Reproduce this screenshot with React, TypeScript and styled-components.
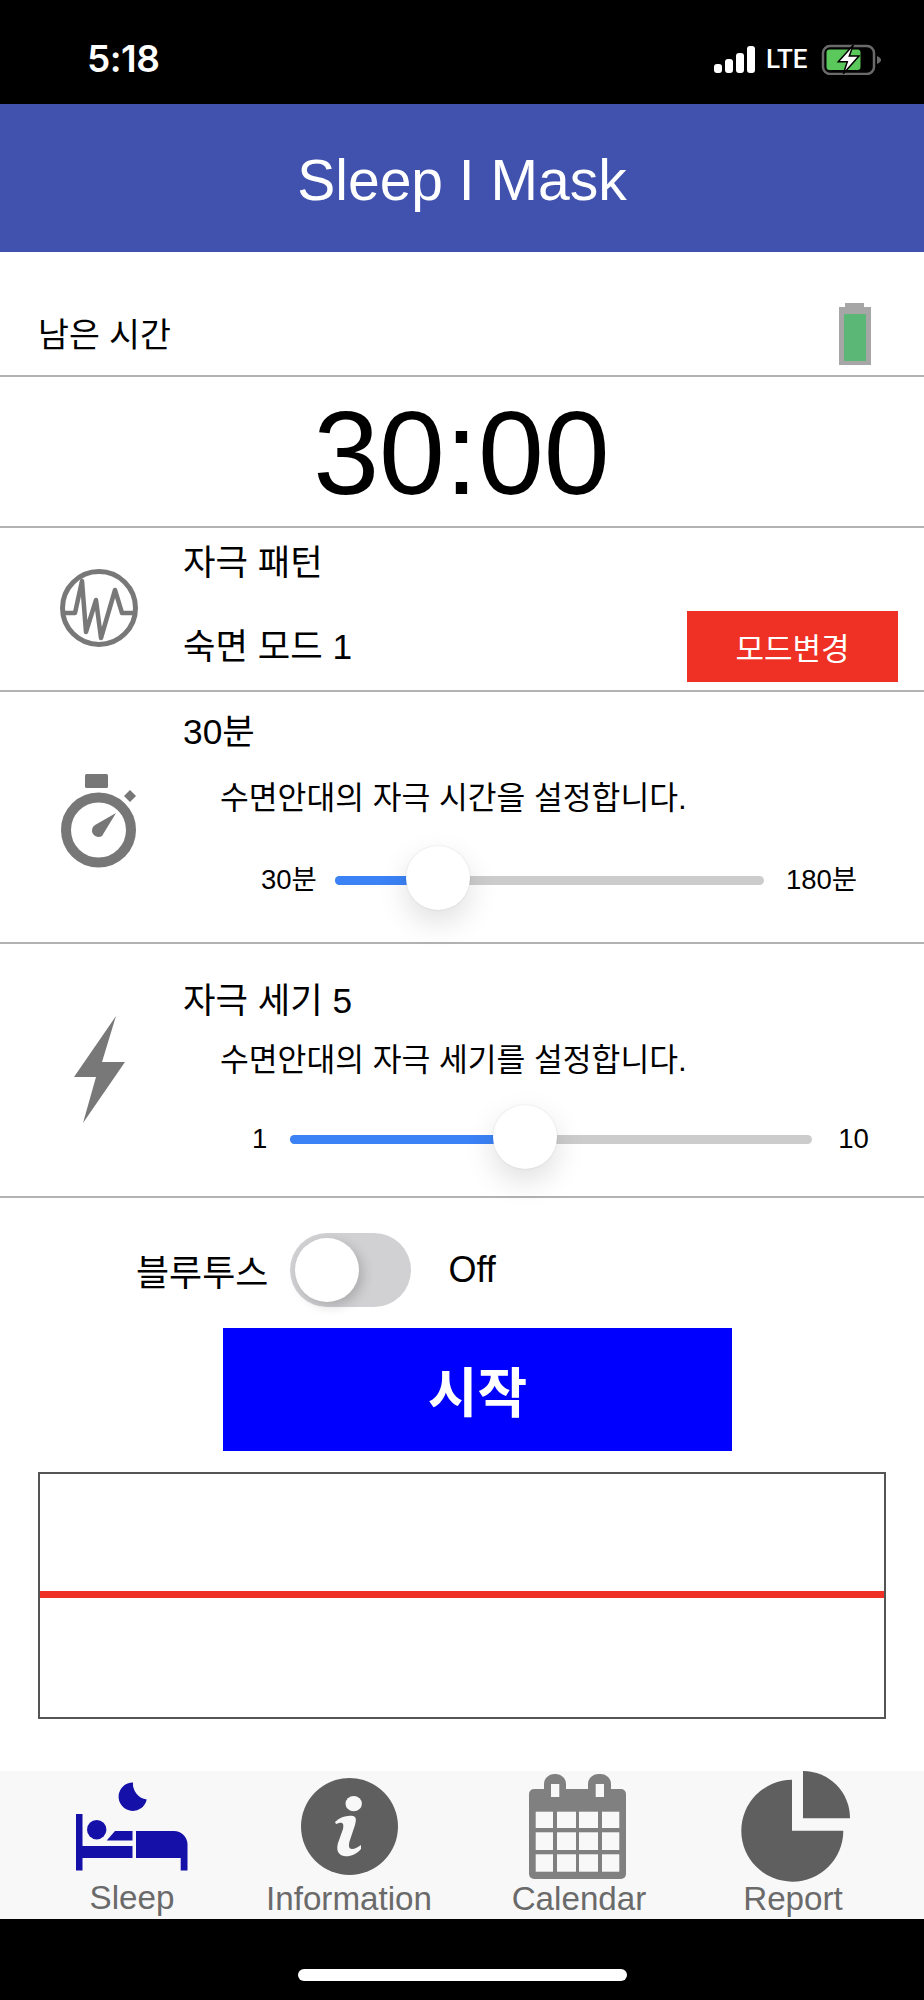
import React from 'react';
import styled, { createGlobalStyle } from 'styled-components';

const GlobalStyle = createGlobalStyle`
  html, body {
    margin: 0;
    padding: 0;
    background: #ffffff;
  }
  * {
    box-sizing: border-box;
  }
`;

const Screen = styled.div`
  width: 924px;
  height: 2000px;
  display: flex;
  flex-direction: column;
  font-family: "Liberation Sans", "Noto Sans CJK KR", sans-serif;
  color: #000000;
`;

const StatusBar = styled.div`
  height: 104px;
  background: #000000;
  color: #ffffff;
  display: flex;
  align-items: center;
  justify-content: space-between;
  padding: 14px 42px 0 87px;
`;

const Clock = styled.span`
  font-family: Inter, sans-serif;
  font-size: 37px;
  font-weight: 600;
  letter-spacing: -0.5px;
  margin-top: -1px;
`;

const StatusIcons = styled.div`
  display: flex;
  align-items: center;
  gap: 11px;
`;

const Signal = styled.div`
  display: flex;
  align-items: flex-end;
  gap: 3px;
  height: 27px;
`;

const SignalBar = styled.span<{ $height: number }>`
  width: 8px;
  height: ${(p) => p.$height}px;
  background: #ffffff;
  border-radius: 3px;
`;

const Lte = styled.span`
  font-family: Roboto, sans-serif;
  font-size: 26px;
  font-weight: 500;
  width: 43px;
`;

const Header = styled.div`
  height: 148px;
  padding-top: 3px;
  background: #4051ae;
  color: #ffffff;
  font-size: 57px;
  display: flex;
  align-items: center;
  justify-content: center;
`;

const Row = styled.div<{ $height: number }>`
  height: ${(p) => p.$height}px;
  border-bottom: 2px solid #b2b2b2;
`;

const RemainingRow = styled(Row)`
  display: flex;
  justify-content: space-between;
  padding: 51px 53px 0 38px;
  font-size: 33.6px;
`;

const RemainingLabel = styled.span`
  margin-top: 5px;
`;

const TimerRow = styled(Row)`
  display: flex;
  align-items: center;
  justify-content: center;
  font-size: 118.5px;
  line-height: 1;
  padding: 3px 1px 0 0;
`;

const IconRow = styled(Row)`
  display: grid;
  grid-template-columns: 183px 1fr;
`;

const IconCell = styled.div<{ $top: number; $left: number }>`
  padding: ${(p) => p.$top}px 0 0 ${(p) => p.$left}px;
`;

const Body = styled.div<{ $top: number }>`
  display: flex;
  flex-direction: column;
  padding-top: ${(p) => p.$top}px;
`;

const Title = styled.div`
  font-size: 35.3px;
  line-height: 46px;
`;

const ModeLine = styled.div`
  display: flex;
  align-items: center;
  justify-content: space-between;
  margin-top: 25px;
  padding-right: 26px;
`;

const ModeButton = styled.button`
  width: 211px;
  height: 71px;
  border: none;
  padding: 0;
  background: #ee3124;
  color: #ffffff;
  font-family: inherit;
  font-size: 31px;
`;

const Description = styled.div<{ $top: number }>`
  font-size: 31.3px;
  line-height: 40px;
  margin: ${(p) => p.$top}px 0 0 37px;
`;

const SliderLine = styled.div<{ $top: number; $left: number; $track: number; $gap: number }>`
  display: grid;
  grid-template-columns: auto ${(p) => p.$track}px auto;
  column-gap: ${(p) => p.$gap}px;
  justify-content: start;
  align-items: center;
  margin: ${(p) => p.$top}px 0 0 ${(p) => p.$left}px;
  font-size: 27.5px;
  line-height: 34px;
`;

const Track = styled.div`
  position: relative;
  height: 9px;
  border-radius: 5px;
  background: #cccccc;
`;

const TrackFill = styled.div`
  height: 100%;
  border-radius: 5px;
  background: #3b82f6;
`;

const Thumb = styled.div`
  position: absolute;
  top: calc(50% - 2.5px);
  width: 64px;
  height: 64px;
  border-radius: 50%;
  background: #ffffff;
  transform: translate(-50%, -50%);
  box-shadow: 0 12px 30px rgba(0, 0, 0, 0.13), 0 0 2px rgba(0, 0, 0, 0.12);
`;

const SliderMax = styled.span<{ $shift: number }>`
  margin-left: ${(p) => p.$shift}px;
`;

const Controls = styled.div`
  flex: 1;
  display: flex;
  flex-direction: column;
  padding-top: 35px;
`;

const BluetoothLine = styled.div`
  display: flex;
  align-items: center;
  padding-left: 136px;
  height: 74px;
  font-size: 36px;
`;

const Toggle = styled.div`
  position: relative;
  width: 121px;
  height: 74px;
  margin: 0 37px 0 22px;
  border-radius: 37px;
  background: #d1d1d4;
`;

const ToggleKnob = styled.div`
  position: absolute;
  top: 5px;
  left: 5px;
  width: 64px;
  height: 64px;
  border-radius: 50%;
  background: #ffffff;
  box-shadow: 4px 4px 12px rgba(0, 0, 0, 0.18);
`;

const StartButton = styled.button`
  display: block;
  width: 509px;
  height: 123px;
  margin: 21px 0 0 223px;
  border: none;
  padding: 0;
  background: #0000ff;
  color: #ffffff;
  font-family: inherit;
  font-size: 54px;
  font-weight: 700;
`;

const Graph = styled.div`
  width: 848px;
  height: 247px;
  margin: 21px 0 0 38px;
  border: 2.5px solid #555555;
  display: flex;
  align-items: center;
`;

const GraphLine = styled.div`
  width: 100%;
  height: 7px;
  margin-top: -2px;
  background: #ee3124;
`;

const TabBar = styled.div`
  flex: none;
  height: 148px;
  background: #f8f8f8;
  display: grid;
  grid-template-columns: 264px 170px 290px 138px;
`;

const Tab = styled.div`
  display: flex;
  flex-direction: column;
  align-items: center;
  font-size: 33.2px;
  line-height: 36px;
  color: #6a6a6a;
  white-space: nowrap;
`;

const IconSlot = styled.div<{ $nudge?: number }>`
  height: 111px;
  display: flex;
  align-items: center;
  margin-left: ${(p) => p.$nudge ?? 0}px;
`;

const TabLabel = styled.span<{ $lift?: number }>`
  margin-top: ${(p) => -(p.$lift ?? 0)}px;
`;

const HomeArea = styled.div`
  flex: none;
  height: 81px;
  background: #000000;
  display: flex;
  justify-content: center;
  padding: 50px 0 0 1px;
`;

const HomeIndicator = styled.div`
  width: 329px;
  height: 12px;
  border-radius: 6px;
  background: #ffffff;
`;

const Glyph = styled.svg`
  display: block;
  flex: none;
`;

function ChargingBattery() {
  return (
    <Glyph width="62" height="32" viewBox="0 0 62 32">
      <rect x="3" y="3" width="51" height="28" rx="7" fill="none" stroke="#6a6a6a" strokeWidth="2.5" />
      <rect x="6.5" y="6.5" width="34" height="20.5" rx="3" fill="#5ac85a" />
      <path d="M57 13 C60 14 61 16 61 17 C61 18 60 20 57 21 Z" fill="#6a6a6a" />
      <path d="M33.3 2 L18.3 18.7 H27.3 L23.3 30.7 L39 13 H29.3 Z" fill="#ffffff" stroke="#000000" strokeWidth="1.5" />
    </Glyph>
  );
}

function MaskBattery() {
  return (
    <Glyph width="32" height="62" viewBox="0 0 32 62">
      <path d="M6 0 H25 V4 H32 V62 H0 V4 H6 Z" fill="#a6a6a6" />
      <rect x="5" y="11" width="22" height="47" rx="1" fill="#5bb776" />
    </Glyph>
  );
}

function WaveIcon() {
  return (
    <Glyph width="78" height="78" viewBox="0 0 78 78">
      <circle cx="39" cy="39" r="36.5" fill="none" stroke="#787878" strokeWidth="5" />
      <path
        d="M5 44 H15 L22 12 L26 63 L36 31 L41 69 L55 21 L62 44 H75"
        fill="none"
        stroke="#787878"
        strokeWidth="4.5"
        strokeLinejoin="round"
        strokeLinecap="round"
      />
    </Glyph>
  );
}

function StopwatchIcon() {
  return (
    <Glyph width="78" height="95" viewBox="0 0 78 95">
      <rect x="24" y="0" width="23" height="14" rx="1.5" fill="#777777" />
      <circle cx="37.5" cy="56" r="32.5" fill="none" stroke="#777777" strokeWidth="10" />
      <path d="M69 16 L75 22 L69 28 L63 22 Z" fill="#777777" />
      <path d="M55 39 L41 62 A6.5 6.5 0 1 1 34 51 Z" fill="#777777" />
    </Glyph>
  );
}

function BoltIcon() {
  return (
    <Glyph width="52" height="108" viewBox="0 0 52 108">
      <path d="M42 0 L28 46 H51 L9 107 L22 61 H0 Z" fill="#787878" />
    </Glyph>
  );
}

function SleepIcon() {
  return (
    <Glyph width="112" height="89" viewBox="0 0 112 89">
      <g fill="#1510a8">
        <path d="M57 0.5 A14.2 14.2 0 1 0 70.7 17.5 A 16 16 0 0 1 57 0.5 Z" />
        <rect x="0" y="32" width="6.5" height="56.5" />
        <rect x="6" y="64" width="50.5" height="12" />
        <circle cx="20.7" cy="47.7" r="9.7" />
        <path d="M30.7 58.5 L39 49 H56.5 V58.5 Z" />
        <path d="M60 49 H98 A13.5 13.5 0 0 1 111.5 62.5 V88.5 H104.7 V76 H60 Z" />
      </g>
    </Glyph>
  );
}

function InfoIcon() {
  return (
    <Glyph width="97" height="97" viewBox="0 0 97 97">
      <circle cx="48.5" cy="48.5" r="48.5" fill="#5f5f5f" />
      <ellipse cx="52.7" cy="25.7" rx="8.2" ry="7.6" fill="#f8f8f8" />
      <path
        d="M34 44 C39 39 46 37 52 38 C56 39 55 43 54 47 L49 62 C47 68 48 71 51 71 C54 71 57 69 60 67 L60 71 C55 77 48 79 43 78 C37 77 35 72 37 65 L42 51 C43 46 42 44 38 45 L35 46 Z"
        fill="#f8f8f8"
      />
    </Glyph>
  );
}

function CalendarIcon() {
  const columns = [
    [6.7, 17.3],
    [28, 19],
    [50, 19],
    [73, 17.3],
  ];
  const rows = [
    [37.7, 16.3],
    [58.3, 17.7],
    [80.3, 17.4],
  ];
  return (
    <Glyph width="97" height="105" viewBox="0 0 97 105">
      <rect x="0" y="15" width="97" height="90" rx="5" fill="#808080" />
      <rect x="15" y="0" width="22" height="30" rx="10" fill="#808080" />
      <rect x="59" y="0" width="23" height="30" rx="10" fill="#808080" />
      <rect x="22" y="10" width="8.3" height="13" fill="#f8f8f8" />
      <rect x="66.7" y="10" width="8.3" height="13" fill="#f8f8f8" />
      {rows.map(([y, h]) =>
        columns.map(([x, w]) => <rect key={`${x}-${y}`} x={x} y={y} width={w} height={h} fill="#f8f8f8" />)
      )}
    </Glyph>
  );
}

function ReportIcon() {
  return (
    <Glyph width="110" height="111" viewBox="0 0 110 111">
      <path d="M51 8.7 A51 51 0 1 0 102.3 59.7 H51 Z" fill="#5f5f5f" />
      <path d="M62 0 A47 47 0 0 1 109 47.3 H62 Z" fill="#5f5f5f" />
    </Glyph>
  );
}

type SliderProps = {
  min: string;
  max: string;
  percent: number;
  top: number;
  left: number;
  track: number;
  gap: number;
  maxShift: number;
};

function Slider({ min, max, percent, top, left, track, gap, maxShift }: SliderProps) {
  return (
    <SliderLine $top={top} $left={left} $track={track} $gap={gap}>
      <span>{min}</span>
      <Track>
        <TrackFill style={{ width: `${percent}%` }} />
        <Thumb style={{ left: `${percent}%` }} />
      </Track>
      <SliderMax $shift={maxShift}>{max}</SliderMax>
    </SliderLine>
  );
}

export default function App() {
  return (
    <Screen>
      <GlobalStyle />
      <StatusBar>
        <Clock>5:18</Clock>
        <StatusIcons>
          <Signal>
            <SignalBar $height={9} />
            <SignalBar $height={14} />
            <SignalBar $height={20} />
            <SignalBar $height={27} />
          </Signal>
          <Lte>LTE</Lte>
          <ChargingBattery />
        </StatusIcons>
      </StatusBar>
      <Header>Sleep I Mask</Header>
      <RemainingRow $height={125}>
        <RemainingLabel>남은 시간</RemainingLabel>
        <MaskBattery />
      </RemainingRow>
      <TimerRow $height={151}>30:00</TimerRow>
      <IconRow $height={164}>
        <IconCell $top={41} $left={60}>
          <WaveIcon />
        </IconCell>
        <Body $top={12}>
          <Title>자극 패턴</Title>
          <ModeLine>
            <Title>숙면 모드 1</Title>
            <ModeButton>모드변경</ModeButton>
          </ModeLine>
        </Body>
      </IconRow>
      <IconRow $height={252}>
        <IconCell $top={82} $left={61}>
          <StopwatchIcon />
        </IconCell>
        <Body $top={17}>
          <Title>30분</Title>
          <Description $top={24}>수면안대의 자극 시간을 설정합니다.</Description>
          <Slider min="30분" max="180분" percent={24} top={44} left={78} track={429} gap={18} maxShift={4} />
        </Body>
      </IconRow>
      <IconRow $height={254}>
        <IconCell $top={72} $left={74}>
          <BoltIcon />
        </IconCell>
        <Body $top={34}>
          <Title>자극 세기 5</Title>
          <Description $top={17}>수면안대의 자극 세기를 설정합니다.</Description>
          <Slider min="1" max="10" percent={45} top={41} left={69} track={522} gap={23} maxShift={3} />
        </Body>
      </IconRow>
      <Controls>
        <BluetoothLine>
          <span>블루투스</span>
          <Toggle>
            <ToggleKnob />
          </Toggle>
          <span>Off</span>
        </BluetoothLine>
        <StartButton>시작</StartButton>
        <Graph>
          <GraphLine />
        </Graph>
      </Controls>
      <TabBar>
        <Tab>
          <IconSlot>
            <SleepIcon />
          </IconSlot>
          <TabLabel $lift={2}>Sleep</TabLabel>
        </Tab>
        <Tab>
          <IconSlot>
            <InfoIcon />
          </IconSlot>
          <TabLabel $lift={1}>Information</TabLabel>
        </Tab>
        <Tab>
          <IconSlot $nudge={-3}>
            <CalendarIcon />
          </IconSlot>
          <TabLabel $lift={1}>Calendar</TabLabel>
        </Tab>
        <Tab>
          <IconSlot $nudge={5}>
            <ReportIcon />
          </IconSlot>
          <TabLabel $lift={1}>Report</TabLabel>
        </Tab>
      </TabBar>
      <HomeArea>
        <HomeIndicator />
      </HomeArea>
    </Screen>
  );
}
